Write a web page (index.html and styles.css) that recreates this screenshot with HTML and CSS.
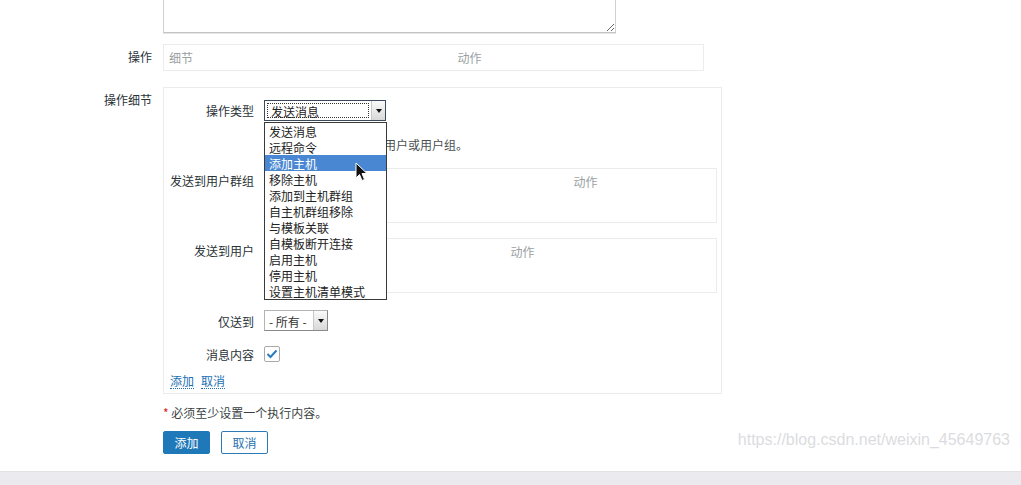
FILE: index.html
```html
<!DOCTYPE html>
<html lang="zh-CN">
<head>
<meta charset="utf-8">
<title>操作细节</title>
<link rel="stylesheet" href="styles.css">
</head>
<body>
<div class="page">
  <div class="form">
    <div class="row row-textarea">
      <div class="label"></div>
      <div class="field"><textarea class="textarea"></textarea></div>
    </div>

    <div class="row row-ops">
      <div class="label">操作</div>
      <div class="field">
        <table class="list ops">
          <colgroup><col class="ops-c1"><col></colgroup>
          <tr><th>细节</th><th>动作</th></tr>
        </table>
      </div>
    </div>

    <div class="row row-detail">
      <div class="label">操作细节</div>
      <div class="field">
        <div class="detail-box">
          <div class="irow irow-type">
            <div class="ilabel">操作类型</div>
            <div class="select-wrap">
              <div class="select select-type">
                <span class="value"><span class="focus">发送消息</span></span>
                <span class="btn"><span class="tri"></span></span>
              </div>
              <ul class="dropdown">
                <li>发送消息</li>
                <li>远程命令</li>
                <li class="active">添加主机</li>
                <li>移除主机</li>
                <li>添加到主机群组</li>
                <li>自主机群组移除</li>
                <li>与模板关联</li>
                <li>自模板断开连接</li>
                <li>启用主机</li>
                <li>停用主机</li>
                <li>设置主机清单模式</li>
              </ul>
              <svg class="cursor" width="13" height="20" viewBox="0 0 13 20">
                <path d="M1 1 L1 16 L4.5 12.5 L7 18.5 L9.5 17.5 L7 11.5 L12 11.5 Z" fill="#111" stroke="#fff" stroke-width="1"/>
              </svg>
            </div>
          </div>

          <div class="irow irow-hint">
            <div class="ilabel"></div>
            <div class="hint">至少选择一个发送目标用户或用户组。</div>
          </div>

          <div class="irow irow-table">
            <div class="ilabel ilabel-top">发送到用户群组</div>
            <table class="list sub sub-groups">
              <colgroup><col class="g-c1"><col></colgroup>
              <tr><th>用户群组</th><th>动作</th></tr>
              <tr><td colspan="2"><a class="link">添加</a></td></tr>
            </table>
          </div>

          <div class="irow irow-table">
            <div class="ilabel ilabel-top">发送到用户</div>
            <table class="list sub sub-users">
              <colgroup><col class="u-c1"><col></colgroup>
              <tr><th>用户</th><th>动作</th></tr>
              <tr><td colspan="2"><a class="link">添加</a></td></tr>
            </table>
          </div>

          <div class="irow irow-only">
            <div class="ilabel ilabel-21">仅送到</div>
            <div class="select select-only">
              <span class="value">- 所有 -</span>
              <span class="btn"><span class="tri"></span></span>
            </div>
          </div>

          <div class="irow irow-msg">
            <div class="ilabel ilabel-16">消息内容</div>
            <span class="checkbox">
              <svg width="12" height="10" viewBox="0 0 12 10"><path d="M1.5 5 L4.5 8 L10.5 1.5" fill="none" stroke="#2a7cc0" stroke-width="2"/></svg>
            </span>
          </div>

          <div class="links">
            <a class="link">添加</a>
            <a class="link">取消</a>
          </div>
        </div>
      </div>
    </div>

    <div class="row row-note">
      <div class="label"></div>
      <div class="field note"><span class="req">*</span> 必须至少设置一个执行内容。</div>
    </div>

    <div class="row row-buttons">
      <div class="label"></div>
      <div class="field buttons">
        <button class="btn-primary">添加</button>
        <button class="btn-alt">取消</button>
      </div>
    </div>
  </div>

  <div class="footer"></div>
  <div class="watermark">https://blog.csdn.net/weixin_45649763</div>
</div>
</body>
</html>
```

FILE: styles.css
```css
* { box-sizing: border-box; }
html, body { margin: 0; padding: 0; }
body {
  font-family: "Noto Sans CJK SC", "DejaVu Sans", sans-serif;
  font-size: 12px;
  color: #1f2c33;
  background: #fff;
  overflow: hidden;
}
.page {
  position: relative;
  width: 1021px;
  height: 485px;
  display: flex;
  flex-direction: column;
}
.form { display: flex; flex-direction: column; }
.row { display: flex; gap: 11px; }
.row .label {
  width: 152px;
  flex: none;
  text-align: right;
  padding-top: 5px;
  line-height: 16px;
  color: #2a3338;
}
.row-textarea { margin-top: -28px; }
.textarea {
  display: block;
  width: 453px;
  height: 61px;
  border: 1px solid #d2d2d2;
  border-bottom-color: #c4c4c4;
  box-shadow: 0 1px 0 #e6e6e6;
  background: #fff;
  resize: both;
  margin: 0;
}

.row-ops { margin-top: 11px; }
.list {
  border: 1px solid #ececec;
  border-collapse: collapse;
  table-layout: fixed;
  background: #fff;
}
.list th {
  height: 27px;
  padding: 0 5px;
  text-align: left;
  font-weight: normal;
  color: #9a9fa3;
  line-height: 16px;
}
.ops th { height: 26px; }
.list td { height: 27px; padding: 0 5px; line-height: 16px; }
.ops { width: 541px; }
.ops-c1 { width: 289px; }

.row-detail { margin-top: 16px; }
.detail-box {
  width: 559px;
  border: 1px solid #ececec;
  padding: 12px 0 4px 6px;
}
.irow { display: flex; gap: 10px; align-items: flex-start; }
.ilabel {
  width: 84px;
  flex: none;
  text-align: right;
  line-height: 20px;
  padding-top: 1px;
  color: #2a3338;
}
.ilabel-top { padding-top: 5px; line-height: 16px; }
.ilabel-21 { line-height: 21px; padding-top: 1px; }
.ilabel-16 { line-height: 16px; padding-top: 1px; }

.irow-hint { margin-top: 16px; }
.hint { line-height: 16px; color: #4a4f53; }
.irow-table { margin-top: 15px; }
.irow-table + .irow-table { margin-top: 15px; }
.sub { width: 453px; }
.g-c1 { width: 304px; }
.u-c1 { width: 241px; }
.irow-only { margin-top: 17px; }
.irow-msg { margin-top: 14px; }

.select-wrap { position: relative; }
.select {
  display: flex;
  align-items: stretch;
  background: #fff;
  line-height: 14px;
}
.select-type {
  width: 122px;
  height: 21px;
  border: 1px solid #3c4a5e;
}
.select-type .value {
  flex: 1;
  padding: 2px;
  display: flex;
}
.select-type .focus {
  flex: 1;
  border: 1px dotted #333;
  padding-left: 3px;
  padding-top: 1px;
  line-height: 13px;
  color: #222;
}
.select .btn {
  width: 14px;
  flex: none;
  background: linear-gradient(#fafafa, #d8d8d8);
  border-left: 1px solid #c8c8c8;
  display: flex;
  align-items: center;
  justify-content: center;
}
.tri {
  width: 0; height: 0;
  border-left: 3px solid transparent;
  border-right: 3px solid transparent;
  border-top: 4px solid #111;
}
.select-only {
  width: 64px;
  height: 21px;
  border: 1px solid #b4b4b4;
  border-right-color: #8a8a8a;
  border-bottom-color: #8a8a8a;
}
.select-only .value {
  flex: 1;
  padding-left: 4px;
  padding-top: 1px;
  line-height: 19px;
  color: #333;
}

.dropdown {
  position: absolute;
  left: 0;
  top: 22px;
  width: 123px;
  margin: 0;
  padding: 0;
  list-style: none;
  background: #fff;
  border: 1px solid #3a3a3a;
  z-index: 10;
}
.dropdown li {
  height: 16px;
  line-height: 14px;
  padding: 2px 0 0 4px;
  color: #222;
  white-space: nowrap;
}
.dropdown li.active { background: #4a87d2; color: #fff; }
.cursor { position: absolute; left: 91px; top: 62px; z-index: 11; }

.checkbox {
  width: 16px;
  height: 16px;
  border: 1px solid #a9a9a9;
  border-radius: 2px;
  display: flex;
  align-items: center;
  justify-content: center;
  background: #fff;
}
.checkbox svg { display: block; }

.links { margin-top: 10px; display: flex; gap: 7px; line-height: 16px; }
.link {
  color: #2070b4;
  border-bottom: 1px dotted #2070b4;
  line-height: 15px;
  cursor: pointer;
}

.row-note { margin-top: 11px; }
.note { line-height: 16px; color: #3a3f43; }
.row-note .label { padding-top: 0; }
.req { color: #d92020; }

.row-buttons { margin-top: 10px; }
.row-buttons .label { padding-top: 0; }
.buttons { display: flex; gap: 11px; }
.buttons button {
  width: 47px;
  height: 23px;
  font-family: inherit;
  font-size: 12px;
  border-radius: 2px;
  padding: 0;
  line-height: 21px;
}
.btn-primary { background: #1f78b8; border: 1px solid #1f78b8; color: #fff; }
.btn-alt { background: #fff; border: 1px solid #2b7ab6; color: #2a72ad; }

.footer {
  margin-top: auto;
  height: 14px;
  background: #ebebef;
  border-top: 1px solid #e2e2e6;
}
.watermark {
  position: absolute;
  right: 11px;
  top: 431px;
  font-family: "Liberation Sans", Arial, sans-serif;
  font-size: 16px;
  line-height: 18px;
  color: #dcdce0;
  white-space: nowrap;
}
```
